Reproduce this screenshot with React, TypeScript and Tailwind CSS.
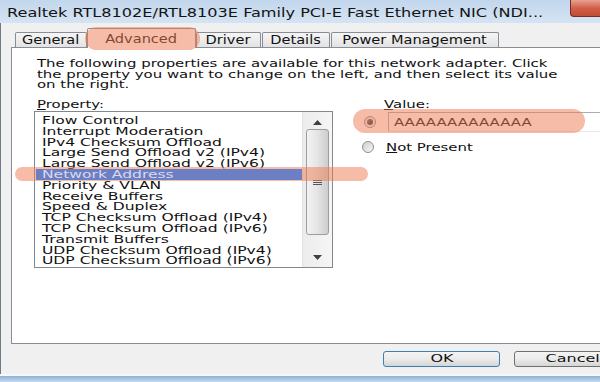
import React from "react";

type P = { children: React.ReactNode };

const TitleText = ({ children }: P) => (
  <span className="inline-block whitespace-nowrap origin-left scale-x-[1.24]">{children}</span>
);
const TabText = ({ children }: P) => (
  <span className="inline-block whitespace-nowrap origin-center scale-x-[1.12]">{children}</span>
);
const B = ({ children }: P) => (
  <span className="inline-block whitespace-nowrap origin-left scale-x-[1.42]">{children}</span>
);
const L = ({ children }: P) => (
  <span className="inline-block whitespace-nowrap origin-left scale-x-[1.48]">{children}</span>
);
const BtnText = ({ children }: P) => (
  <span className="inline-block whitespace-nowrap origin-center scale-x-[1.45]">{children}</span>
);

const tabs = [
  { label: "General", cls: "w-[72px]", sel: false, gap: "" },
  { label: "Advanced", cls: "w-[109px]", sel: true, gap: "" },
  { label: "Driver", cls: "w-[65px]", sel: false, gap: "" },
  { label: "Details", cls: "w-[68px]", sel: false, gap: "ml-[1px]" },
  { label: "Power Management", cls: "w-[168px]", sel: false, gap: "ml-[1px]" },
];

const items = [
  "Flow Control",
  "Interrupt Moderation",
  "IPv4 Checksum Offload",
  "Large Send Offload v2 (IPv4)",
  "Large Send Offload v2 (IPv6)",
  "Network Address",
  "Priority & VLAN",
  "Receive Buffers",
  "Speed & Duplex",
  "TCP Checksum Offload (IPv4)",
  "TCP Checksum Offload (IPv6)",
  "Transmit Buffers",
  "UDP Checksum Offload (IPv4)",
  "UDP Checksum Offload (IPv6)",
];

const RadioOn = () => (
  <div className="w-[12px] h-[12px] shrink-0 rounded-full border border-[#8e8f8f] bg-gradient-to-br from-[#e4e4e4] to-[#fbfbfb] flex items-center justify-center">
    <div className="w-[6px] h-[6px] rounded-full bg-gradient-to-br from-[#6a7a8c] to-[#1c2a38]" />
  </div>
);
const RadioOff = () => (
  <div className="w-[12px] h-[12px] shrink-0 rounded-full border border-[#8e8f8f] bg-gradient-to-br from-[#cfcfcf] to-[#f6f6f6]" />
);

export default function App() {
  return (
    <div className="relative w-[600px] h-[382px] overflow-hidden bg-[#bcd2ea] font-['DejaVu_Sans',sans-serif] text-[#111]">
      {/* Title bar */}
      <div className="flex h-[23px] bg-gradient-to-b from-[#c2d6ec] to-[#d5e4f3]">
        <div className="flex-1 pl-[7px] pt-[6px] text-[13px] leading-[13px] text-[#141414]">
          <TitleText>Realtek RTL8102E/RTL8103E Family PCI-E Fast Ethernet NIC (NDI...</TitleText>
        </div>
        <div className="w-[30px] h-[17px] rounded-bl-[4px] border-l border-b border-[#7a2b23] bg-gradient-to-b from-[#e8a090] via-[#d0604b] to-[#c24a33]" />
      </div>

      {/* Frame + body */}
      <div className="flex h-[351px]">
        <div className="w-[4px] bg-gradient-to-r from-[#c8dcef] to-[#adc7e3]" />
        <div className="flex-1 flex flex-col bg-[#f0f0f0] border-l border-[#6d7a88] pl-[10px] pt-[5px]">
          {/* Tabs */}
          <div className="flex items-end h-[19px] ml-[4px]">
            {tabs.map((t) =>
              t.sel ? (
                <div
                  key={t.label}
                  className={`${t.cls} relative z-[1] h-[20px] -mb-[1px] shrink-0 flex justify-center pt-[2px] text-[13px] leading-[15px] bg-white border border-b-0 border-[#898c95] rounded-t-[2px]`}
                >
                  <TabText>{t.label}</TabText>
                </div>
              ) : (
                <div
                  key={t.label}
                  className={`${t.cls} ${t.gap} h-[15px] shrink-0 flex justify-center text-[13px] leading-[14px] bg-gradient-to-b from-[#f5f5f5] to-[#e3e3e3] border border-b-0 border-[#898c95] rounded-t-[2px]`}
                >
                  <TabText>{t.label}</TabText>
                </div>
              )
            )}
          </div>

          {/* Panel */}
          <div className="w-[600px] h-[297px] shrink-0 border border-[#898c95] bg-white pl-[22px] pt-[10px] text-[10.5px] leading-[10.5px]">
            <div className="ml-[3px]">
              <div><B>The following properties are available for this network adapter. Click</B></div>
              <div><B>the property you want to change on the left, and then select its value</B></div>
              <div><B>on the right.</B></div>
            </div>

            <div className="flex mt-[9px]">
              {/* Left column */}
              <div className="w-[299px] shrink-0">
                <div className="ml-[3px]">
                  <B>
                    <span className="underline">P</span>roperty:
                  </B>
                </div>
                <div className="mt-[2px] h-[157px] border border-[#828790] bg-white flex">
                  <div className="flex-1 pt-[3px] pl-[1px] overflow-hidden">
                    {items.map((it) =>
                      it === "Network Address" ? (
                        <div
                          key={it}
                          className="relative z-20 h-[10.8px] leading-[10.8px] pl-[6px] bg-[#6d7fc3] text-[#d8d8f0]"
                        >
                          <L>{it}</L>
                        </div>
                      ) : (
                        <div key={it} className="h-[10.8px] leading-[10.8px] pl-[6px]">
                          <L>{it}</L>
                        </div>
                      )
                    )}
                  </div>
                  {/* Scrollbar */}
                  <div className="w-[30px] shrink-0 flex flex-col bg-gradient-to-r from-[#ececec] to-[#f6f6f6] border-l border-[#e2e2e2]">
                    <div className="h-[17px] flex items-end justify-center pb-[4px]">
                      <svg width="9" height="5" viewBox="0 0 9 5">
                        <path d="M0 5 L4.5 0 L9 5 Z" fill="#404040" />
                      </svg>
                    </div>
                    <div className="mx-[3px] h-[106px] rounded-[3px] border border-[#9c9c9c] bg-gradient-to-r from-[#f3f3f3] via-[#e4e4e4] to-[#cdcdcd] flex flex-col items-center justify-center gap-[1px]">
                      <div className="w-[9px] h-[1px] bg-[#555]" />
                      <div className="w-[9px] h-[1px] bg-[#555]" />
                      <div className="w-[9px] h-[1px] bg-[#555]" />
                    </div>
                    <div className="flex-1" />
                    <div className="h-[17px] flex items-start justify-center pt-[5px]">
                      <svg width="9" height="5" viewBox="0 0 9 5">
                        <path d="M0 0 L4.5 5 L9 0 Z" fill="#404040" />
                      </svg>
                    </div>
                  </div>
                </div>
              </div>

              {/* Right column */}
              <div className="ml-[29px] flex-1">
                <div className="ml-[22px]">
                  <B>
                    <span className="underline">V</span>alue:
                  </B>
                </div>
                <div className="mt-[3px] flex items-center ml-[2px]">
                  <RadioOn />
                  <div className="ml-[12px] flex-1 h-[20px] border border-[#abadb3] border-b-[#e3e9ef] flex items-center pl-[5px] text-[10.5px]">
                    <B>AAAAAAAAAAAAA</B>
                  </div>
                </div>
                <div className="mt-[9px] flex items-center h-[12px]">
                  <RadioOff />
                  <div className="ml-[12px] text-[10.5px] leading-[12px]">
                    <B>
                      <span className="underline">N</span>ot Present
                    </B>
                  </div>
                </div>
              </div>
            </div>
          </div>

          {/* Buttons */}
          <div className="flex mt-[7px] pl-[372px]">
            <div className="w-[117px] h-[16px] shrink-0 rounded-[3px] border border-[#3c7fb1] bg-gradient-to-b from-[#f4f4f4] via-[#ebebeb] to-[#d5d5d5] flex items-center justify-center text-[11px] leading-[12px]">
              <BtnText>OK</BtnText>
            </div>
            <div className="ml-[14px] w-[117px] h-[16px] shrink-0 rounded-[3px] border border-[#707070] bg-gradient-to-b from-[#f4f4f4] via-[#ebebeb] to-[#d5d5d5] flex items-center justify-center text-[11px] leading-[12px]">
              <BtnText>Cancel</BtnText>
            </div>
          </div>
        </div>
      </div>

      {/* Bottom frame */}
      <div className="h-[8px] border-t-[2px] border-[#f6f9fc] bg-gradient-to-b from-[#8fb0d6] to-[#c7dbef]" />

      {/* Highlight overlays */}
      <div className="absolute left-[85px] top-[27px] w-[115px] h-[23px] rounded-full bg-[#ee7a50]/50 z-10 pointer-events-none" />
      <div className="absolute left-[15px] top-[167px] w-[353px] h-[14px] rounded-full bg-[#ee7a50]/50 z-10 pointer-events-none" />
      <div className="absolute left-[353px] top-[109px] w-[232px] h-[24px] rounded-full bg-[#ee7a50]/50 z-10 pointer-events-none" />
    </div>
  );
}
